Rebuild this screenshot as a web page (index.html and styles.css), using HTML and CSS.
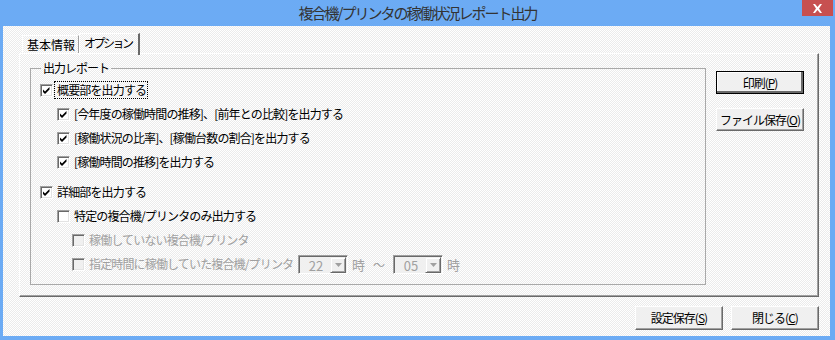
FILE: index.html
```html
<!DOCTYPE html>
<html lang="ja">
<head>
<meta charset="utf-8">
<title>複合機/プリンタの稼働状況レポート出力</title>
<link rel="stylesheet" href="styles.css">
</head>
<body>
<div class="window">
  <div class="titlebar">
    <span></span>
    <span class="title">複合機/プリンタの稼働状況レポート出力</span>
    <span class="close"><svg width="11" height="9" viewBox="0 0 11 9"><path d="M1 0h2l2.5 3 2.5-3h2L7 4.5 10 9H8L5.5 6 3 9H1L4 4.5z" fill="#fff"/></svg></span>
  </div>
  <div class="client">
    <div class="tabs">
      <div class="tab">基本情報</div>
      <div class="tab active">オプション</div>
    </div>
    <div class="panel">
      <fieldset class="group">
        <legend>出力レポート</legend>
        <div class="row lv0">
          <span class="cb checked"><svg viewBox="0 0 9 9"><path d="M1 3.5 3 5.5 7.5 1V3.5L3 8 1 6z"/></svg></span>
          <span class="label focus">概要部を出力する</span>
        </div>
        <div class="row lv1">
          <span class="cb checked"><svg viewBox="0 0 9 9"><path d="M1 3.5 3 5.5 7.5 1V3.5L3 8 1 6z"/></svg></span>
          <span class="label">[今年度の稼働時間の推移]、[前年との比較]を出力する</span>
        </div>
        <div class="row lv1">
          <span class="cb checked"><svg viewBox="0 0 9 9"><path d="M1 3.5 3 5.5 7.5 1V3.5L3 8 1 6z"/></svg></span>
          <span class="label">[稼働状況の比率]、[稼働台数の割合]を出力する</span>
        </div>
        <div class="row lv1">
          <span class="cb checked"><svg viewBox="0 0 9 9"><path d="M1 3.5 3 5.5 7.5 1V3.5L3 8 1 6z"/></svg></span>
          <span class="label">[稼働時間の推移]を出力する</span>
        </div>
        <div class="row lv0 sep">
          <span class="cb checked"><svg viewBox="0 0 9 9"><path d="M1 3.5 3 5.5 7.5 1V3.5L3 8 1 6z"/></svg></span>
          <span class="label">詳細部を出力する</span>
        </div>
        <div class="row lv1">
          <span class="cb"></span>
          <span class="label">特定の複合機/プリンタのみ出力する</span>
        </div>
        <div class="row lv2 disabled">
          <span class="cb"></span>
          <span class="label">稼働していない複合機/プリンタ</span>
        </div>
        <div class="row lv2 disabled">
          <span class="cb"></span>
          <span class="label wide">指定時間に稼働していた複合機/プリンタ</span>
          <span class="combo"><span class="val">22</span><span class="arrow"><svg width="7" height="4" viewBox="0 0 7 4"><path d="M0 0h7L3.5 4z" fill="#a0a0a0"/></svg></span></span>
          <span class="unit">時</span>
          <span class="tilde">～</span>
          <span class="combo"><span class="val">05</span><span class="arrow"><svg width="7" height="4" viewBox="0 0 7 4"><path d="M0 0h7L3.5 4z" fill="#a0a0a0"/></svg></span></span>
          <span class="unit">時</span>
        </div>
      </fieldset>
      <div class="side">
        <button class="btn default">印刷(<u>P</u>)</button>
        <button class="btn">ファイル保存(<u>O</u>)</button>
      </div>
    </div>
    <div class="footer">
      <button class="btn">設定保存(<u>S</u>)</button>
      <button class="btn">閉じる(<u>C</u>)</button>
    </div>
  </div>
</div>
</body>
</html>
```

FILE: styles.css
```css
html, body {
  margin: 0;
  padding: 0;
}
body {
  font-family: "Noto Sans CJK JP", "Noto Sans", sans-serif;
  font-size: 12px;
  color: #000;
}
.window {
  width: 835px;
  height: 340px;
  background: #6cabf4;
  display: flex;
  flex-direction: column;
}
.titlebar {
  height: 26px;
  display: grid;
  grid-template-columns: 1fr auto 1fr;
  align-items: start;
}
.title {
  font-size: 15px;
  letter-spacing: -2px;
  line-height: 26px;
  color: #333;
}
.close {
  justify-self: end;
  margin-right: 2px;
  width: 31px;
  height: 16px;
  background: #c75050;
  display: flex;
  align-items: center;
  justify-content: center;
}
.client {
  flex: 1;
  margin: 0 5px 4px 3px;
  background: repeating-conic-gradient(#ffffff 0 25%, #ebebeb 0 50%) 0 0 / 2px 2px;
  padding: 7px 11px 0 16px;
  display: flex;
  flex-direction: column;
}
.tabs {
  display: flex;
  align-items: flex-end;
  height: 20px;
  padding-left: 3px;
  position: relative;
  z-index: 1;
}
.tab {
  height: 18px;
  line-height: 18px;
  padding: 0 3px 0 4px;
  border-left: 1px solid #fff;
  border-top: 1px solid #fff;
  border-right: 1px solid #a0a0a0;
  box-sizing: border-box;
}
.tab.active {
  height: 22px;
  margin-bottom: -2px;
  line-height: 18px;
  padding: 0 6px 0 4px;
  letter-spacing: -2.5px;
  border-right: 2px solid #696969;
}
.panel {
  height: 244px;
  box-sizing: border-box;
  border-top: 1px solid #fff;
  border-left: 1px solid #fff;
  border-right: 1px solid #696969;
  border-bottom: 1px solid #696969;
  box-shadow: inset -1px -1px 0 #a0a0a0;
  display: flex;
  align-items: flex-start;
  padding: 7px 14px 0 10px;
  gap: 10px;
}
.group {
  margin: 0;
  width: 677px;
  height: 224px;
  box-sizing: border-box;
  border: 1px solid #a9a9a9;
  padding: 3px 0 0 9px;
}
.group legend {
  padding: 0 2px;
  margin-left: 1px;
  letter-spacing: -1px;
  line-height: 14px;
}
.row {
  display: flex;
  align-items: center;
  height: 24px;
  white-space: nowrap;
}
.row.lv1 { padding-left: 17px; }
.row.lv2 { padding-left: 32px; }
.row.sep { margin-top: 6px; }
.cb {
  width: 13px;
  height: 13px;
  box-sizing: border-box;
  background: #fff;
  border-top: 1px solid #a0a0a0;
  border-left: 1px solid #a0a0a0;
  border-right: 1px solid #fff;
  border-bottom: 1px solid #fff;
  box-shadow: inset 1px 1px 0 #696969, inset -1px -1px 0 #e3e3e3;
  flex: none;
  display: flex;
  align-items: center;
  justify-content: center;
}
.cb svg {
  width: 9px;
  height: 9px;
  fill: #000;
}
.label {
  margin-left: 4px;
  letter-spacing: -0.85px;
  line-height: 14px;
}
.label.focus {
  margin-left: 2px;
  padding: 1px 1px 1px 2px;
  outline: 1px dotted #000;
}
.disabled {
  color: #a0a0a0;
}
.disabled .cb {
  background: #f0f0f0;
}
.label.wide {
  flex: none;
  width: 209px;
}
.combo {
  flex: none;
  width: 50px;
  height: 19px;
  box-sizing: border-box;
  border-top: 1px solid #a0a0a0;
  border-left: 1px solid #a0a0a0;
  border-right: 1px solid #fff;
  border-bottom: 1px solid #fff;
  box-shadow: inset 1px 1px 0 #696969;
  background: #f0f0f0;
  display: flex;
  align-items: stretch;
  padding: 1px 1px 0 1px;
}
.combo .val {
  flex: 1;
  text-align: center;
  font-size: 13px;
  line-height: 17px;
  padding-left: 2px;
}
.combo .arrow {
  width: 16px;
  height: 16px;
  box-sizing: border-box;
  background: #f0f0f0;
  border-top: 1px solid #f0f0f0;
  border-left: 1px solid #f0f0f0;
  border-right: 1px solid #696969;
  border-bottom: 1px solid #696969;
  box-shadow: inset 1px 1px 0 #fff, inset -1px -1px 0 #a0a0a0;
  display: flex;
  align-items: center;
  justify-content: center;
}
.unit {
  margin-left: 4px;
  font-size: 13px;
}
.tilde {
  margin: 0 8px 0 8px;
  font-size: 12px;
}
.side {
  display: flex;
  flex-direction: column;
  gap: 14px;
  padding-top: 10px;
}
.btn {
  font-family: inherit;
  font-size: 12px;
  letter-spacing: -1px;
  color: #000;
  background: #f0f0f0;
  width: 88px;
  height: 23px;
  box-sizing: border-box;
  border-top: 1px solid #fff;
  border-left: 1px solid #fff;
  border-right: 1px solid #696969;
  border-bottom: 1px solid #696969;
  box-shadow: inset -1px -1px 0 #a0a0a0;
  padding: 0;
  margin: 0;
  line-height: 20px;
}
.btn.default {
  border: 1px solid #000;
  box-shadow: inset -2px -2px 0 #696969, inset 1px 1px 0 #fff;
}
.btn u {
  text-decoration: underline;
  text-underline-offset: 1px;
}
.footer {
  display: flex;
  justify-content: flex-end;
  gap: 8px;
  margin-top: 9px;
}
.footer .btn {
  height: 24px;
}
```
